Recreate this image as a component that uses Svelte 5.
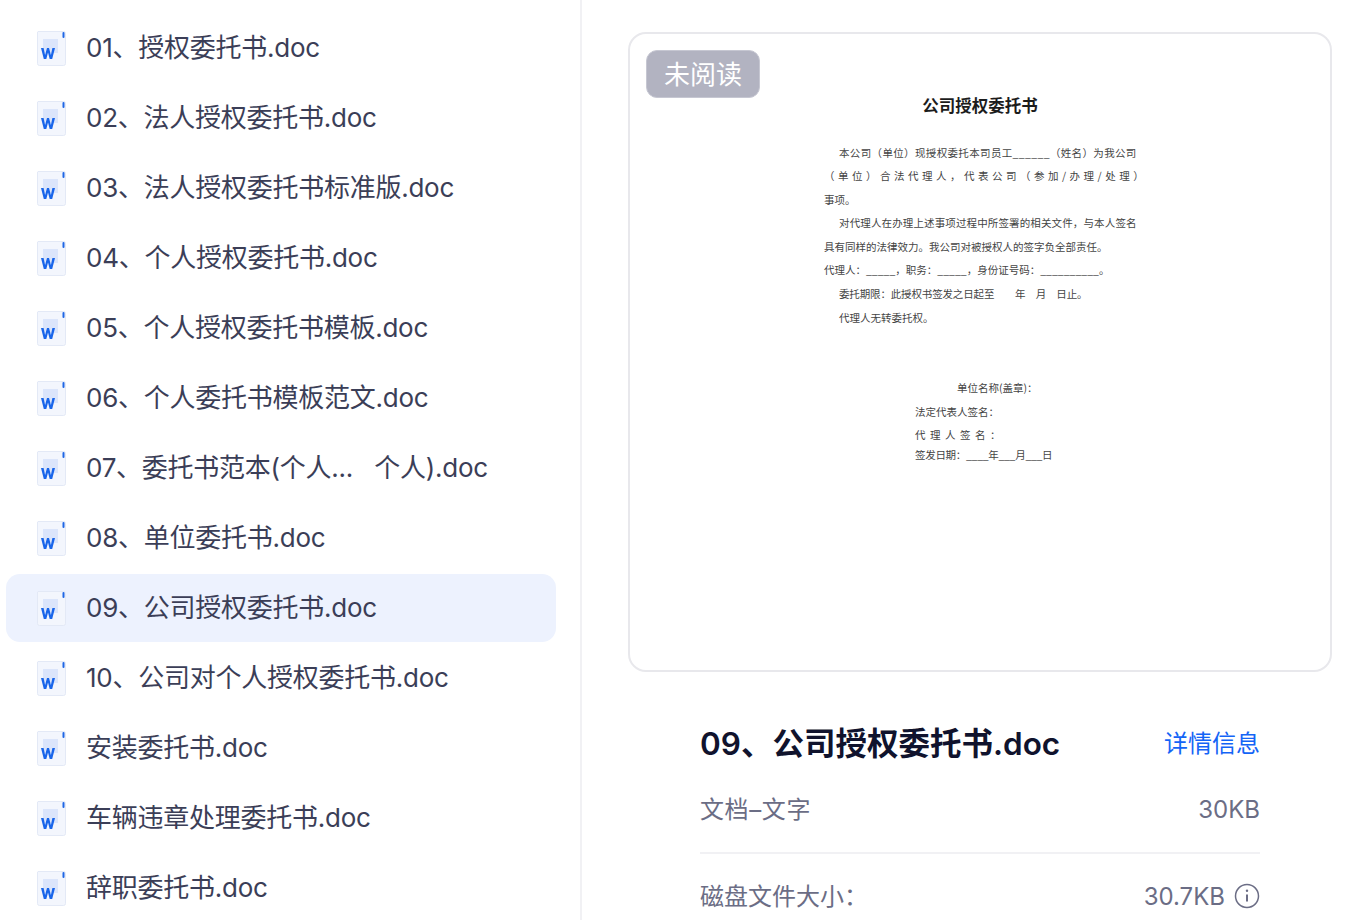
<script>
  const files = [
    '01、授权委托书.doc',
    '02、法人授权委托书.doc',
    '03、法人授权委托书标准版.doc',
    '04、个人授权委托书.doc',
    '05、个人授权委托书模板.doc',
    '06、个人委托书模板范文.doc',
    '07、委托书范本(个人...   个人).doc',
    '08、单位委托书.doc',
    '09、公司授权委托书.doc',
    '10、公司对个人授权委托书.doc',
    '安装委托书.doc',
    '车辆违章处理委托书.doc',
    '辞职委托书.doc'
  ];
  const activeIndex = 8;
</script>

<div class="page">
  <aside class="list">
    {#each files as name, i}
      <div class="row" class:active={i === activeIndex}>
        <svg class="icon" width="32" height="36" viewBox="0 0 32 36">
          <path d="M2 1.5h25.5a2 2 0 0 1 2 2v30a2 2 0 0 1-2 2H3.5a2 2 0 0 1-2-2V2z" fill="#f3f6fd" stroke="#e3e9f6" />
          <rect x="7" y="9" width="15" height="14" fill="#dbe5fb" />
          <rect x="26.5" y="2" width="2" height="6" rx="1" fill="#1f66e5" />
          <path d="M5 18h2.6l1.5 7 1.9-7h2l1.900 7 1.500-7H19l-2.800 11h-2.500l-1.700-6.500L10.300 29H7.800z" fill="#1a66ea" />
        </svg>
        <span class="name">{name}</span>
      </div>
    {/each}
  </aside>

  <main class="detail">
    <section class="preview">
      <span class="badge">未阅读</span>
      <div class="doc">
        <h2>公司授权委托书</h2>
        <p class="indent loose">本公司（单位）现授权委托本司员工______（姓名）为我公司</p>
        <p class="spread">（单位）合法代理人，代表公司（参加/办理/处理）</p>
        <p>事项。</p>
        <p class="indent snug">对代理人在办理上述事项过程中所签署的相关文件，与本人签名</p>
        <p>具有同样的法律效力。我公司对被授权人的签字负全部责任。</p>
        <p>代理人：_____，职务：_____，身份证号码：__________。</p>
        <p class="indent tight">委托期限：此授权书签发之日起至　　年　月　日止。</p>
        <p class="indent">代理人无转委托权。</p>
        <div class="sign">
          <p class="org">单位名称(盖章)：</p>
          <p>法定代表人签名：</p>
          <p class="wide">代理人签名：</p>
          <p class="date">签发日期：____年___月___日</p>
        </div>
      </div>
    </section>

    <section class="info">
      <div class="head">
        <h1>09、公司授权委托书.doc</h1>
        <span class="link">详情信息</span>
      </div>
      <div class="meta first">
        <span class="label wider">文档–文字</span>
        <span>30KB</span>
      </div>
      <div class="meta">
        <span class="label">磁盘文件大小：</span>
        <span class="size">
          30.7KB
          <svg width="26" height="26" viewBox="0 0 26 26" fill="none" stroke="#6b6d85" stroke-width="1.500">
            <circle cx="13" cy="13" r="11.500" />
            <path d="M13 11.500v7" stroke-width="2" />
            <circle cx="13" cy="7.800" r="1.200" fill="#6b6d85" stroke="none" />
          </svg>
        </span>
      </div>
    </section>
  </main>
</div>

<style>
  :global(body) {
    margin: 0;
    background: #fff;
  }

  .page {
    display: flex;
    height: 920px;
    overflow: hidden;
    font-family: Inter, "Noto Sans CJK SC", sans-serif;
  }

  /* File list */
  .list {
    width: 582px;
    flex-shrink: 0;
    box-sizing: border-box;
    padding: 14px 24px 0 6px;
    border-right: 2px solid #f1f1f4;
  }

  .row {
    display: flex;
    align-items: center;
    height: 68px;
    margin-bottom: 2px;
    padding-left: 30px;
    border-radius: 14px;
  }

  .row.active {
    background: #edf2fe;
  }

  .icon {
    flex-shrink: 0;
    margin-right: 18px;
  }

  .name {
    padding-bottom: 6px;
    font-size: 26px;
    letter-spacing: -0.25px;
    color: #3b3e57;
    white-space: pre;
  }

  /* Right side */
  .detail {
    flex: 1;
    min-width: 0;
    padding: 32px 38px 0 46px;
  }

  .preview {
    position: relative;
    box-sizing: border-box;
    height: 640px;
    border: 2px solid #e8e8ec;
    border-radius: 18px;
  }

  .badge {
    position: absolute;
    left: 16px;
    top: 16px;
    box-sizing: border-box;
    width: 114px;
    height: 48px;
    line-height: 48px;
    text-align: center;
    font-size: 26px;
    color: #fff;
    background: #b2b3c1;
    border: 1px solid #c6c7d2;
    border-radius: 11px;
  }

  .doc {
    width: 312px;
    margin: 0 auto;
    padding-top: 58px;
    font-family: "Noto Sans CJK SC", sans-serif;
    font-size: 10.500px;
    color: #444;
  }

  .doc h2 {
    margin: 0 0 22.500px;
    height: 26px;
    line-height: 26px;
    text-align: center;
    font-size: 16.500px;
    font-weight: 700;
    color: #1c1c1c;
  }

  .doc p {
    margin: 0;
    height: 23.600px;
    line-height: 23.600px;
    white-space: pre;
  }

  .doc p.indent {
    padding-left: 15px;
  }

  .doc p.loose {
    letter-spacing: 0.350px;
  }

  .doc p.snug {
    letter-spacing: 0.130px;
  }

  .doc p.tight {
    letter-spacing: -0.150px;
  }

  .doc p.spread {
    letter-spacing: 3.500px;
  }

  .sign {
    margin-top: 47px;
    padding-left: 91px;
  }

  .sign .org {
    padding-left: 42px;
  }

  .sign .wide {
    letter-spacing: 4.500px;
  }

  .doc .sign .date {
    height: 16px;
    line-height: 16px;
    letter-spacing: -0.300px;
  }

  .info {
    padding: 0 72px;
  }

  .head {
    display: flex;
    justify-content: space-between;
    align-items: center;
    height: 44px;
    margin-top: 47px;
  }

  h1 {
    margin: 0;
    font-size: 31.500px;
    font-weight: 600;
    color: #10132d;
    white-space: nowrap;
  }

  .link {
    font-size: 24px;
    color: #1464f6;
  }

  .meta {
    display: flex;
    justify-content: space-between;
    align-items: center;
    height: 44px;
    margin-top: 20px;
    font-size: 24px;
    color: #6b6d85;
  }

  .meta.first {
    margin-top: 24px;
    padding-bottom: 21px;
    border-bottom: 2px solid #f1f1f4;
  }

  .label {
    padding-bottom: 4px;
  }

  .label.wider {
    letter-spacing: 0.600px;
  }

  .size {
    display: flex;
    align-items: center;
    gap: 9px;
  }
</style>
